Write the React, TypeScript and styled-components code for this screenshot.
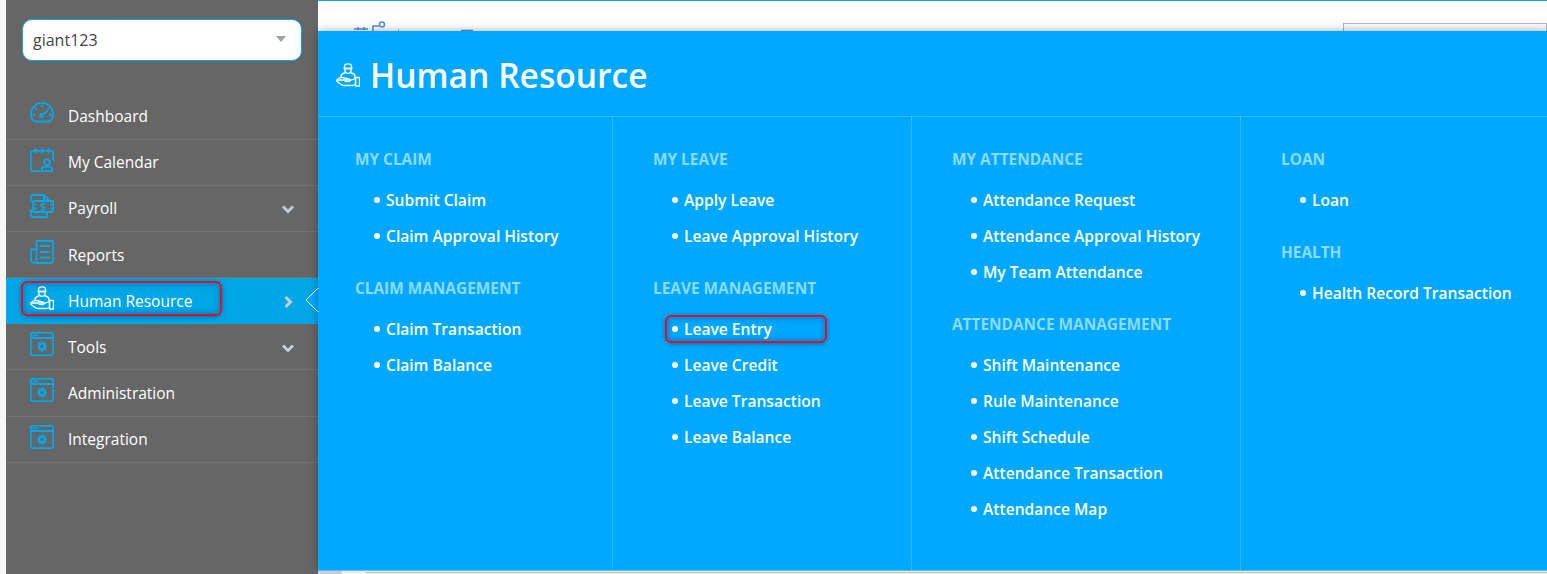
import React from "react";
import styled, { createGlobalStyle } from "styled-components";

const Global = createGlobalStyle`
  html, body { margin: 0; padding: 0; height: 100%; overflow: hidden; background: #f7f7f7; }
  #root { height: 574px; }
  * { box-sizing: border-box; }
`;

const Page = styled.div`
  display: grid;
  grid-template-columns: 6px 312px 1fr;
  width: 1547px;
  height: 574px;
  overflow: hidden;
  font-family: "Open Sans", "Noto Sans", sans-serif;
`;
const Gutter = styled.div`background: #f7f7f7;`;
const Sidebar = styled.aside`
  background: #666666;
  padding-top: 19px;
`;
const SelectBox = styled.div`
  display: flex;
  align-items: center;
  justify-content: space-between;
  height: 42px;
  margin: 0 16px;
  padding: 0 15px 0 10px;
  background: #fff;
  border: 1px solid #00a8e8;
  border-radius: 10px;
  font-size: 16px;
  color: #444;
`;
const Caret = styled.span`
  width: 0; height: 0;
  margin-top: -3px;
  border-left: 5px solid transparent;
  border-right: 5px solid transparent;
  border-top: 6px solid #9aa3ad;
`;
const Nav = styled.ul`
  list-style: none;
  margin: 32.4px 0 0;
  padding: 0;
`;
const NavRow = styled.li<{ $active?: boolean }>`
  position: relative;
  display: flex;
  align-items: center;
  height: ${p => (p.$active ? "46px" : "46.2px")};
  padding: 0 23px 0 24px;
  gap: 14px;
  font-size: 15.5px;
  color: #fff;
  background: ${p => (p.$active ? "#00a6e6" : "transparent")};
  border-bottom: 1px solid ${p => (p.$active ? "transparent" : "#727272")};
`;
const Glyph = styled.svg<{ $light?: boolean }>`
  width: 24px;
  height: 24px;
  flex: none;
  margin-bottom: 5px;
  fill: none;
  stroke: ${p => (p.$light ? "#fff" : "#00a8ec")};
  stroke-width: ${p => (p.$light ? 1.3 : 1.8)};
  stroke-linecap: round;
  stroke-linejoin: round;
`;
const NavLabel = styled.span`
  flex: 1;
`;
const Chevron = styled.svg`
  width: 14px;
  height: 14px;
  margin-top: 2px;
  fill: none;
  stroke: #c5ccd3;
  stroke-width: 3;
`;
const Notch = styled.svg`
  position: absolute;
  right: 0;
  top: 10px;
  width: 13px;
  height: 24px;
  fill: #00a8ff;
  stroke: #fff;
  stroke-width: 1;
`;
const Callout = styled.span<{ $l: number; $t: number; $w: number; $h: number }>`
  position: absolute;
  left: ${p => p.$l}px;
  top: ${p => p.$t}px;
  width: ${p => p.$w}px;
  height: ${p => p.$h}px;
  border: 2px solid #e0122a;
  border-radius: 6px;
  box-shadow: 0 1px 5px rgba(0, 60, 110, .55), inset 0 0 6px rgba(0, 60, 110, .55);
  pointer-events: none;
`;
const Main = styled.main`
  display: flex;
  flex-direction: column;
  min-width: 0;
  background: #fff;
`;
const TopBar = styled.div`
  position: relative;
  height: 31px;
  flex: none;
  border-top: 1px solid #00a8e8;
  background: #fff;
`;
const Behind = styled.svg`
  position: absolute;
  left: 36px;
  top: 20px;
  width: 120px;
  height: 10px;
  fill: none;
  stroke: #5f8fd0;
  stroke-width: 1.6;
`;
const SearchEdge = styled.div`
  position: absolute;
  left: 1025px;
  top: 22px;
  right: 0;
  height: 12px;
  border: 1px solid #b5b5b5;
  background: #fafafa;
`;
const Panel = styled.section`
  position: relative;
  z-index: 1;
  flex: 1;
  display: flex;
  flex-direction: column;
  background: #00a8ff;
  color: #fff;
  border-bottom: 1px solid #4cc2ff;
  box-shadow: 0 0 8px rgba(0, 0, 0, .35);
`;
const PanelHead = styled.header`
  display: flex;
  align-items: center;
  height: 86px;
  padding: 5px 0 0 18px;
  gap: 10px;
  border-bottom: 1px solid #33b9ff;
  & > svg { margin-bottom: 3px; }
`;
const PanelTitle = styled.h1`
  margin: 0;
  font-size: 33.6px;
  font-weight: 600;
  line-height: 1;
`;
const Columns = styled.div`
  flex: 1;
  display: grid;
  grid-template-columns: 295px 299px 329px 1fr;
`;
const Column = styled.div`
  padding: 33px 0 0 40px;
  border-right: 1px solid #33b9ff;
  &:first-child { padding-left: 37px; }
  &:last-child { border-right: 0; }
`;
const GroupTitle = styled.h2`
  margin: 0;
  height: 20px;
  font-size: 15.4px;
  line-height: 20px;
  font-weight: 700;
  color: #8ddcff;
  text-transform: uppercase;
`;
const Links = styled.ul`
  list-style: none;
  margin: 12px 0 25px;
  padding: 0 0 0 19px;
`;
const LinkItem = styled.li`
  position: relative;
  display: flex;
  align-items: center;
  height: 36px;
  gap: 6px;
  font-size: 15.6px;
  font-weight: 600;
  white-space: nowrap;
  &::before {
    content: "";
    width: 6px;
    height: 6px;
    border-radius: 50%;
    background: #fff;
    flex: none;
  }
`;
const BottomStrip = styled.div`
  position: relative;
  z-index: 2;
  flex: none;
  display: flex;
  align-items: center;
  height: 3px;
  background: #f1f1f1;
`;
const StripThumb = styled.span`
  width: 24px;
  height: 3px;
  background: #cdcdcd;
`;
const StripLine = styled.span`
  flex: 1;
  height: 1px;
  margin-left: 24px;
  background: #bdbdbd;
`;

const Gauge = () => (
  <Glyph viewBox="0 0 24 24">
    <path d="M4 20.500a11 11 0 1 1 16 0z" />
    <path d="M12 4.500v1M5.500 7.500l.7.7M18.500 7.500l-.7.7M3.500 13.500h1M19.500 13.500h1M12 14l5-3.500" />
    <circle cx="11.500" cy="14.500" r="1.500" fill="#00a8ec" />
  </Glyph>
);
const Calendar = () => (
  <Glyph viewBox="0 0 24 24">
    <path d="M9.500 23.200H3a2.200 2.200 0 0 1-2.200-2.200V5A2.200 2.200 0 0 1 3 2.800h18A2.200 2.200 0 0 1 23.200 5v7" />
    <path d="M5.500.8v4M12 .8v4M18.500.8v4" />
    <circle cx="17" cy="14" r="2.800" />
    <path d="M11.500 23.200v-1.500a3.500 3.500 0 0 1 3.500-3h4a3.500 3.500 0 0 1 3.500 3v1.500z" />
  </Glyph>
);
const Money = () => (
  <Glyph viewBox="0 0 24 24">
    <path d="M1 7V3a2 2 0 0 1 2-2h11l5 5.500M1 16v5a2 2 0 0 0 2 2h14v-5" />
    <path d="M14 1v5.500h5" />
    <rect x="3" y="7" width="20.500" height="11" rx="1" />
    <path d="M6 10a2 2 0 0 1-1 1M21 10a2 2 0 0 0 1 1M6 15a2 2 0 0 0-1-1M21 15a2 2 0 0 1 1-1" />
    <path d="M15 10h-3a1.400 1.400 0 0 0 0 3h1.500a1.400 1.400 0 0 1 0 3H11M13 8.800v8.400" strokeWidth="1.2" />
  </Glyph>
);
const Report = () => (
  <Glyph viewBox="0 0 24 24">
    <path d="M7 23h13.500a2.500 2.500 0 0 0 2.500-2.500V1H6.500v19.500A2.500 2.500 0 0 1 4 23a3 3 0 0 1-3-3V9.500h5.500" />
    <path d="M10.500 6h8.500M10.500 12h8.500M10.500 17.500h8.500" strokeWidth="2" />
  </Glyph>
);
const Hand = () => (
  <Glyph $light viewBox="0 0 24 24">
    <path d="M8.500 5.500V3.500C8.500 1.800 10 .8 12 .8s3.500 1 3.500 2.700v2z" />
    <path d="M8 5.500h8M8.800 6.500c0 2.500 1.300 3.800 3.200 3.800s3.200-1.300 3.200-3.800" />
    <path d="M5 15v-1.500c0-1.800 1.500-3 3.800-3.500M19 15v-1.500c0-1.800-1.500-3-3.800-3.500" />
    <path d="M1 17c1.500-2 3.500-2.800 5.500-2.500l6.500 1.700c1.500.4 1.200 2.600-.5 2.500L9 18.400" />
    <path d="M13.500 17h2l4-1.500v6l-3 1H8.500c-3 0-5-2-7.300-4-.6-.5-.6-1.200-.2-1.500z" />
    <path d="M19.500 14.500h4v8.500h-4z" />
  </Glyph>
);
const Gear = () => (
  <Glyph viewBox="0 0 24 24">
    <rect x=".8" y=".8" width="22.400" height="22.400" rx="1.800" />
    <path d="M.8 6h22.400M3.500 3.400h1M6.500 3.400h1" />
    <circle cx="12" cy="14.500" r="2.800" strokeWidth="2.200" />
    <path d="M12 9.500v1.500M12 18v1.500M7 14.500h1.500M15.500 14.500H17M8.500 11l1 1M14.500 17l1 1M15.500 11l-1 1M9.500 17l-1 1" strokeWidth="2.200" strokeLinecap="butt" />
  </Glyph>
);
const Down = () => (
  <Chevron viewBox="0 0 14 14"><path d="M2 4.500l5 5 5-5" /></Chevron>
);
const Right = () => (
  <Chevron viewBox="0 0 14 14"><path d="M4.500 2l5 5-5 5" /></Chevron>
);

const menu = [
  { label: "Dashboard", icon: <Gauge /> },
  { label: "My Calendar", icon: <Calendar /> },
  { label: "Payroll", icon: <Money />, more: <Down /> },
  { label: "Reports", icon: <Report /> },
  { label: "Human Resource", icon: <Hand />, more: <Right />, active: true },
  { label: "Tools", icon: <Gear />, more: <Down /> },
  { label: "Administration", icon: <Gear /> },
  { label: "Integration", icon: <Gear /> },
];

type Group = { title: string; links: string[] };
const columns: Group[][] = [
  [
    { title: "My Claim", links: ["Submit Claim", "Claim Approval History"] },
    { title: "Claim Management", links: ["Claim Transaction", "Claim Balance"] },
  ],
  [
    { title: "My Leave", links: ["Apply Leave", "Leave Approval History"] },
    { title: "Leave Management", links: ["Leave Entry", "Leave Credit", "Leave Transaction", "Leave Balance"] },
  ],
  [
    { title: "My Attendance", links: ["Attendance Request", "Attendance Approval History", "My Team Attendance"] },
    { title: "Attendance Management", links: ["Shift Maintenance", "Rule Maintenance", "Shift Schedule", "Attendance Transaction", "Attendance Map"] },
  ],
  [
    { title: "Loan", links: ["Loan"] },
    { title: "Health", links: ["Health Record Transaction"] },
  ],
];

export default function App() {
  return (
    <Page>
      <Global />
      <Gutter />
      <Sidebar>
        <SelectBox>giant123<Caret /></SelectBox>
        <Nav>
          {menu.map(m => (
            <NavRow key={m.label} $active={m.active}>
              {m.icon}
              <NavLabel>{m.label}</NavLabel>
              {m.more}
              {m.active && (
                <>
                  <Callout $l={15} $t={3} $w={201} $h={35} />
                  <Notch viewBox="0 0 13 24"><path d="M13 0 1 12l12 12" /></Notch>
                </>
              )}
            </NavRow>
          ))}
        </Nav>
      </Sidebar>
      <Main>
        <TopBar>
          <Behind viewBox="0 0 120 10">
            <path d="M0 8h14M4 6v3M10 6v3M19 10V5h6" />
            <circle cx="28" cy="3.500" r="2.500" />
            <path d="M44 9h1M107 9.500h12" />
          </Behind>
          <SearchEdge />
        </TopBar>
        <Panel>
          <PanelHead>
            <Hand />
            <PanelTitle>Human Resource</PanelTitle>
          </PanelHead>
          <Columns>
            {columns.map((groups, i) => (
              <Column key={i}>
                {groups.map(g => (
                  <React.Fragment key={g.title}>
                    <GroupTitle>{g.title}</GroupTitle>
                    <Links>
                      {g.links.map(l => (
                        <LinkItem key={l}>
                          {l}
                          {l === "Leave Entry" && <Callout $l={-7} $t={4} $w={162} $h={28} />}
                        </LinkItem>
                      ))}
                    </Links>
                  </React.Fragment>
                ))}
              </Column>
            ))}
          </Columns>
        </Panel>
        <BottomStrip>
          <StripThumb />
          <StripLine />
        </BottomStrip>
      </Main>
    </Page>
  );
}
